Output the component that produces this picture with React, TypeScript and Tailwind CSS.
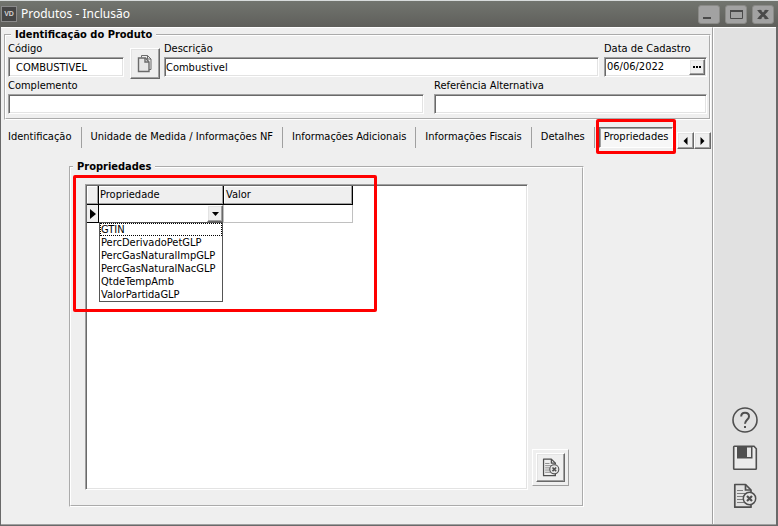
import React, { useState } from 'react';

const sunken =
  'border border-t-[#a0a0a0] border-l-[#a0a0a0] border-b-white border-r-white bg-white shadow-[inset_1px_1px_0_#696969,inset_-1px_-1px_0_#e3e3e3]';
const raised =
  'border border-t-white border-l-white border-b-[#696969] border-r-[#696969] bg-[#efefef] shadow-[inset_-1px_-1px_0_#a0a0a0,inset_1px_1px_0_#e3e3e3]';
const group = 'border-2 [border-style:groove] border-white min-w-0';

const tabs = [
  'Identificação',
  'Unidade de Medida / Informações NF',
  'Informações Adicionais',
  'Informações Fiscais',
  'Detalhes',
];

const options = [
  'GTIN',
  'PercDerivadoPetGLP',
  'PercGasNaturalImpGLP',
  'PercGasNaturalNacGLP',
  'QtdeTempAmb',
  'ValorPartidaGLP',
];

const CopyIcon = () => (
  <svg width="16" height="20" viewBox="0 0 16 20" fill="none" stroke="#6b6b6b">
    <path d="M4.5 3.5v-2h6l3.500 3.500v10.500H12" />
    <path d="M10.500 1.500V5H14" />
    <path d="M1.500 4h7l3.500 4v9.500H1.500z" fill="#e6e6e6" strokeWidth="1.400" />
    <path d="M8 4v4h4" strokeWidth="1.400" />
  </svg>
);

const DocCancelIcon = ({ className }: { className: string }) => (
  <svg viewBox="0 0 24 26" className={className} fill="none" stroke="#4f4f4f">
    <path d="M18 9V7l-5.500-5.500H1.800v22.700H18V22" strokeWidth="1.700" strokeLinejoin="round" />
    <path d="M12.500 1.500V7H18" strokeWidth="1.700" />
    <path d="M4 7.500h6M4 10.500h11M4 13.500h6.500M4 16.500h6M4 19.500h7" stroke="#7d7d7d" strokeWidth="1.200" />
    <circle cx="16.500" cy="15.500" r="6.200" fill="#e6e6e6" strokeWidth="1.500" />
    <path d="M14 13l5 5M19 13l-5 5" strokeWidth="2.200" />
  </svg>
);

const HelpIcon = () => (
  <svg width="26" height="26" viewBox="0 0 26 26" fill="none" stroke="#4f4f4f">
    <circle cx="13" cy="13" r="12" strokeWidth="1.600" />
    <path d="M9.200 9.500C9.200 7 10.700 5.800 13 5.800s4 1.400 4 3.600c0 3.200-4 3.600-4 7.400" strokeWidth="2" />
    <path d="M12 19h2v2h-2z" fill="#4f4f4f" stroke="none" />
  </svg>
);

const SaveIcon = () => (
  <svg width="26" height="26" viewBox="0 0 26 26" fill="none" stroke="#4f4f4f">
    <path d="M1.700 2q0-.7.700-.7h19.600l2.300 2.500v19.700q0 .7-.7.700H2.400q-.7 0-.7-.7z" strokeWidth="1.600" fill="#ebebeb" />
    <path d="M5 1.500h15.500V13.500H5z" fill="#4f4f4f" stroke="none" />
    <path d="M15 2.500h4V12h-4z" fill="#e6e6e6" stroke="none" />
  </svg>
);

const WindowButton = ({ label, children }: { label: string; children: React.ReactNode }) => (
  <button
    type="button"
    aria-label={label}
    className="flex h-[19px] w-[22px] items-center justify-center rounded-[3px] border border-[#8a8a87] bg-[#a2a2a2]"
  >
    <svg width="20" height="17" viewBox="0 0 20 17" fill="none" stroke="#4a4a4a">
      {children}
    </svg>
  </button>
);

interface FieldProps {
  id: string;
  label: string;
  value?: string;
  className: string;
  inputClass?: string;
}

const Field: React.FC<FieldProps> = ({ id, label, value = '', className, inputClass = 'pl-[2px]' }) => {
  const [text, setText] = useState(value);

  return (
    <div className={`flex flex-col ${className}`}>
      <label htmlFor={id} className="h-4 whitespace-nowrap leading-4">{label}</label>
      <input
        id={id}
        value={text}
        onChange={(e) => setText(e.target.value)}
        className={`h-5 w-full outline-none ${sunken} ${inputClass}`}
      />
    </div>
  );
};

const TitleBar = () => (
  <header className="flex h-[27px] shrink-0 items-center border-t border-[#d8dcdc] bg-linear-to-b from-[#72756f] to-[#5f5f5b] pr-1 pl-px">
    <span className="flex h-4 w-4 items-center justify-center border border-[#8b8b8b] bg-[#454545] font-['Liberation_Sans'] text-[7px] font-bold text-[#d0d0d0]">
      VD
    </span>
    <h1 className="ml-1 flex-1 font-['Noto_Sans',sans-serif] text-[12px] text-white">Produtos - Inclusão</h1>
    <div className="flex gap-[5px]">
      <WindowButton label="Minimizar">
        <path d="M4 12h8" strokeWidth="2" />
      </WindowButton>
      <WindowButton label="Maximizar">
        <path d="M4.500 4.500h12v8h-12z" />
        <path d="M4 5h13" strokeWidth="2" />
      </WindowButton>
      <WindowButton label="Fechar">
        <path d="M6 4.500l8 8M14 4.500l-8 8" strokeWidth="2.800" />
        <path d="M4.500 4.500h4M11.500 4.500h4M4.500 12.500h4M11.500 12.500h4" />
      </WindowButton>
    </div>
  </header>
);

const ProductFields = () => {
  const [date, setDate] = useState('06/06/2022');

  return (
    <fieldset className={`mr-px ml-[3px] px-[2px] pb-1 ${group}`}>
      <legend className="ml-[3px] px-1 font-bold leading-3">Identificação do Produto</legend>
      <div className="flex items-end">
        <Field id="codigo" label="Código" value="COMBUSTIVEL" className="w-[116px]" inputClass="pl-[7px]" />
        <button type="button" aria-label="Copiar" className={`-mb-[2px] ml-[6px] flex h-[31px] w-[30px] shrink-0 items-center justify-center ${raised}`}>
          <CopyIcon />
        </button>
        <Field id="descricao" label="Descrição" value="Combustivel" className="ml-1 flex-1" inputClass="pl-px" />
        <div className="ml-[5px] flex w-[103px] flex-col">
          <label htmlFor="data" className="h-4 whitespace-nowrap leading-4">Data de Cadastro</label>
          <div className={`flex h-5 p-px ${sunken}`}>
            <input
              id="data"
              value={date}
              onChange={(e) => setDate(e.target.value)}
              className="min-w-0 flex-1 pl-px outline-none"
            />
            <button type="button" aria-label="Abrir calendário" className={`flex w-4 items-center justify-center ${raised}`}>
              <svg width="10" height="4" viewBox="0 0 10 4">
                <path d="M1 1h2v2H1zM4 1h2v2H4zM7 1h2v2H7z" />
              </svg>
            </button>
          </div>
        </div>
      </div>
      <div className="mt-px flex gap-[10px]">
        <Field id="complemento" label="Complemento" className="flex-[416]" />
        <Field id="referencia" label="Referência Alternativa" className="flex-[273]" />
      </div>
    </fieldset>
  );
};

const TabBar = () => (
  <nav className="mt-[7px] flex h-[22px] items-start">
    {tabs.map((tab) => (
      <button
        key={tab}
        type="button"
        className="h-[21px] border-r border-[#a0a0a0] px-[9px] whitespace-nowrap first:pl-[7px]"
      >
        {tab}
      </button>
    ))}
    <div className="relative ml-1">
      <button
        type="button"
        className="h-[21px] border border-t-[#696969] border-l-[#696969] border-r-white border-b-white bg-[#f7f7f7] px-1 shadow-[inset_1px_1px_0_#a0a0a0]"
      >
        Propriedades
      </button>
      <div className="pointer-events-none absolute -inset-x-[3px] -top-2 -bottom-[6px] rounded-[2px] border-3 border-[#ff0000]" />
    </div>
    <div className="mr-px ml-auto flex shrink-0 self-end">
      <button type="button" aria-label="Anterior" className={`flex h-[17px] w-[17px] items-center justify-center ${raised}`}>
        <svg width="5" height="8" viewBox="0 0 5 8"><path d="M4.500 0v8L.5 4z" /></svg>
      </button>
      <button type="button" aria-label="Próximo" className={`flex h-[17px] w-[17px] items-center justify-center ${raised}`}>
        <svg width="5" height="8" viewBox="0 0 5 8"><path d="M.5 0v8l4-4z" /></svg>
      </button>
    </div>
  </nav>
);

const headCell =
  'h-[19px] border-r border-b border-black bg-[#efefef] p-0 text-left font-normal shadow-[inset_-1px_-1px_0_#a0a0a0,inset_1px_1px_0_#fff]';

const PropertyGrid = () => {
  const [selected, setSelected] = useState('');
  const [value, setValue] = useState('');

  return (
    <table className="w-[266px] table-fixed border-separate border-spacing-0">
      <colgroup>
        <col className="w-3" />
        <col className="w-[125px]" />
        <col className="w-[129px]" />
      </colgroup>
      <thead>
        <tr>
          <th className={headCell} />
          <th className={headCell}><span className="pl-px">Propriedade</span></th>
          <th className={headCell}><span className="pl-[2px]">Valor</span></th>
        </tr>
      </thead>
      <tbody>
        <tr>
          <td className="h-[18px] border-r border-b border-black bg-[#efefef] p-0">
            <svg width="11" height="12" viewBox="0 0 11 12"><path d="M3 1v10l6-5z" /></svg>
          </td>
          <td className="relative h-[18px] border-r border-b border-[#c0c0c0] p-0">
            <div className="flex h-[17px]">
              <select
                aria-label="Propriedade"
                value={selected}
                onChange={(e) => setSelected(e.target.value)}
                className="min-w-0 flex-1 appearance-none pl-px outline-none"
              >
                <option value="" />
                {options.map((o) => <option key={o} value={o}>{o}</option>)}
              </select>
              <button type="button" aria-label="Abrir lista" className={`flex w-4 items-center justify-center ${raised}`}>
                <svg width="7" height="4" viewBox="0 0 7 4"><path d="M0 0h7L3.500 4z" /></svg>
              </button>
            </div>
            <ul role="listbox" aria-label="Opções de propriedade" className="absolute top-full left-0 z-10 w-[124px] border border-[#555] bg-white">
              {options.map((o) => (
                <li
                  key={o}
                  role="option"
                  aria-selected={o === selected}
                  onClick={() => setSelected(o)}
                  className="h-[13px] border border-transparent leading-[11px] first:border-dotted first:border-black"
                >
                  {o}
                </li>
              ))}
            </ul>
          </td>
          <td className="h-[18px] border-r border-b border-[#c0c0c0] p-0">
            <input
              aria-label="Valor"
              value={value}
              onChange={(e) => setValue(e.target.value)}
              className="block h-[17px] w-full px-[2px] outline-none"
            />
          </td>
        </tr>
      </tbody>
    </table>
  );
};

const App: React.FC = () => {
  return (
    <div className="flex min-h-screen flex-col bg-[#efefef] font-['DejaVu_Sans_Condensed','DejaVu_Sans',sans-serif] text-[11px] text-black">
      <TitleBar />
      <div className="flex flex-1 border-r-2 border-b-2 border-l border-[#696969]">
        <main className="flex min-w-0 flex-1 flex-col border-t border-b border-t-white border-b-[#a0a0a0] pt-px">
          <ProductFields />
          <TabBar />
          <fieldset className={`mt-3 mr-32 mb-[17px] ml-[68px] flex-1 ${group}`}>
            <legend className="ml-[2px] px-1 font-bold leading-3">Propriedades</legend>
            <div className="mt-[11px] mr-[13px] mb-[15px] ml-[14px] flex h-[306px] items-end gap-1">
              <div className={`relative h-full flex-1 p-px ${sunken}`}>
                <PropertyGrid />
                <div className="pointer-events-none absolute -top-[10px] -left-[13px] z-20 h-[137px] w-[304px] rounded-[2px] border-3 border-[#ff0000]" />
              </div>
              <div className="mb-1 border border-t-white border-l-white border-r-[#a0a0a0] border-b-[#a0a0a0] p-[3px]">
                <button type="button" aria-label="Excluir propriedade" className={`flex h-[29px] w-[29px] items-center justify-center ${raised}`}>
                  <DocCancelIcon className="h-[19px] w-[18px]" />
                </button>
              </div>
            </div>
          </fieldset>
        </main>
        <aside className="flex w-16 shrink-0 flex-col items-center justify-end gap-3 border-t border-b border-l border-t-white border-b-[#a0a0a0] border-l-[#a0a0a0] bg-[#e1e1e1] pb-[15px] shadow-[inset_1px_0_0_#fff]">
          <button type="button" aria-label="Ajuda"><HelpIcon /></button>
          <button type="button" aria-label="Salvar"><SaveIcon /></button>
          <button type="button" aria-label="Cancelar"><DocCancelIcon className="h-[26px] w-6" /></button>
        </aside>
      </div>
    </div>
  );
};

export default App;
